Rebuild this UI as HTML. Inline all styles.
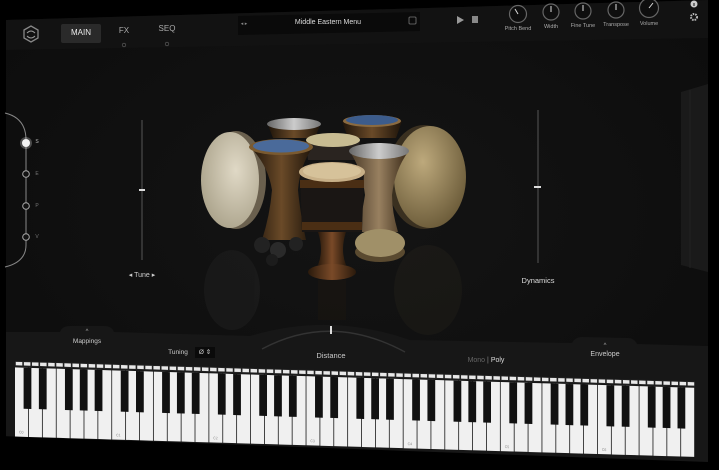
<!DOCTYPE html>
<html><head><meta charset="utf-8"><style>
html,body{margin:0;padding:0;background:#000;width:719px;height:470px;overflow:hidden;font-family:"Liberation Sans",sans-serif;}
.a{position:absolute;}
.t{position:absolute;color:#ddd;font-size:7px;white-space:nowrap;transform:translateX(-50%);}
</style></head><body>
<svg class="a" style="left:0;top:0" width="719" height="470" viewBox="0 0 719 470">
<defs>
<radialGradient id="vg" cx="0.5" cy="0.45" r="0.7">
<stop offset="0" stop-color="#141414"/><stop offset="1" stop-color="#0c0c0c"/></radialGradient>
<linearGradient id="met" x1="0" x2="1"><stop offset="0" stop-color="#666"/><stop offset=".5" stop-color="#ccc"/><stop offset="1" stop-color="#777"/></linearGradient>
<linearGradient id="wood" x1="0" x2="1"><stop offset="0" stop-color="#2a1a0c"/><stop offset=".5" stop-color="#7a4a28"/><stop offset="1" stop-color="#2a1a0c"/></linearGradient>
<linearGradient id="pat" x1="0" x2="1"><stop offset="0" stop-color="#1e140a"/><stop offset=".5" stop-color="#6a4a28"/><stop offset="1" stop-color="#1e140a"/></linearGradient>
<linearGradient id="pat2" x1="0" x2="1"><stop offset="0" stop-color="#4a3a28"/><stop offset=".5" stop-color="#988060"/><stop offset="1" stop-color="#3a2a18"/></linearGradient>
<radialGradient id="fd1" cx=".6" cy=".4" r=".7"><stop offset="0" stop-color="#e0d9c6"/><stop offset="1" stop-color="#a8a088"/></radialGradient>
<radialGradient id="fd2" cx=".4" cy=".35" r=".7"><stop offset="0" stop-color="#bda97c"/><stop offset="1" stop-color="#6a5a38"/></radialGradient>
</defs>
<polygon points="6,20 708,0 708,470 6,470" fill="url(#vg)"/>
<polygon points="6,20 708,0 708,38 6,50" fill="#121212"/>
<path d="M6,332 L60,332 Q62,326 70,326 L104,326 Q112,326 114,332 L250,336 Q330,312 410,340 L572,343 Q575,337 582,337 L628,338 Q634,338 637,344 L708,346 L708,470 L6,470 Z" fill="#171717"/>
<path d="M262,349 Q331,312 405,352" stroke="#333" stroke-width="1.5" fill="none"/>
<rect x="330" y="326" width="2" height="8" fill="#ddd"/>
<polygon points="681,92 708,84 708,272 681,265" fill="#1a1a1a"/>
<line x1="690" y1="90" x2="690" y2="268" stroke="#222"/>
<polygon points="0,436 708,462 708,470 0,470" fill="#000"/>
<rect x="708" y="0" width="11" height="470" fill="#000"/>
<path d="M5,113 Q26,118 26,140 L26,245 Q26,262 5,267" stroke="#888" stroke-width="1" fill="none"/>
<circle cx="26" cy="143" r="6" fill="#fff" opacity=".25"/>
<circle cx="26" cy="143" r="4" fill="#f2f2f2"/>
<circle cx="26" cy="174" r="3.3" fill="#121212" stroke="#aaa"/>
<circle cx="26" cy="206" r="3.3" fill="#121212" stroke="#aaa"/>
<circle cx="26" cy="237" r="3.3" fill="#121212" stroke="#aaa"/>
<rect x="141" y="120" width="2" height="140" fill="#333"/>
<rect x="139" y="189" width="6" height="2" fill="#ddd"/>
<rect x="537" y="110" width="2" height="153" fill="#333"/>
<rect x="534" y="186" width="7" height="2" fill="#ddd"/>
<g opacity=".12">
<ellipse cx="232" cy="290" rx="28" ry="40" fill="#555"/>
<ellipse cx="428" cy="290" rx="34" ry="45" fill="#554a30"/>
<rect x="318" y="280" width="28" height="40" fill="#3a2410"/>
</g>
<ellipse cx="236" cy="180" rx="30" ry="49" fill="#6a604e"/>
<ellipse cx="230" cy="180" rx="29" ry="48" fill="url(#fd1)"/>
<ellipse cx="424" cy="177" rx="37" ry="52" fill="#3a3020"/>
<ellipse cx="430" cy="177" rx="36" ry="51" fill="url(#fd2)"/>
<path d="M268,125 L320,125 L315,138 L273,138 Z" fill="url(#pat)"/>
<ellipse cx="294" cy="124" rx="27" ry="6" fill="url(#met)"/>
<path d="M342,121 L402,121 L396,138 L348,138 Z" fill="url(#pat)"/>
<ellipse cx="372" cy="121" rx="29" ry="6" fill="#8a6a40"/>
<ellipse cx="372" cy="120" rx="26" ry="5" fill="#3c5c8c"/>
<path d="M306,140 L360,140 L358,160 L308,160 Z" fill="#2a2420"/>
<ellipse cx="333" cy="140" rx="27" ry="7" fill="#c8bc92"/>
<path d="M250,147 Q268,165 272,190 Q270,215 262,240 L306,240 Q300,212 298,190 Q300,165 313,147 Z" fill="url(#pat)"/>
<ellipse cx="281" cy="147" rx="32" ry="8" fill="#7a5a30"/>
<ellipse cx="281" cy="146" rx="28" ry="6.5" fill="#4a6a9a"/>
<path d="M350,152 Q362,170 365,195 Q362,215 356,232 L398,232 Q392,212 392,195 Q395,170 408,152 Z" fill="url(#pat2)"/>
<ellipse cx="379" cy="151" rx="30" ry="8" fill="url(#met)"/>
<circle cx="262" cy="245" r="8" fill="#222"/><circle cx="278" cy="250" r="8" fill="#2a2a2a"/><circle cx="296" cy="244" r="7" fill="#222"/><circle cx="272" cy="260" r="6" fill="#1c1c1c"/>
<path d="M300,172 L364,172 L362,232 L302,232 Z" fill="#1a1614"/>
<rect x="300" y="180" width="64" height="8" fill="#4a2e14"/>
<rect x="302" y="222" width="60" height="8" fill="#4a2e14"/>
<path d="M318,232 L346,232 Q340,250 346,265 L318,265 Q324,250 318,232 Z" fill="url(#wood)"/>
<ellipse cx="332" cy="272" rx="24" ry="8" fill="url(#wood)"/>
<ellipse cx="332" cy="172" rx="33" ry="10" fill="#c8b088"/>
<ellipse cx="332" cy="171" rx="29" ry="8" fill="#d6c29a"/>
<ellipse cx="380" cy="252" rx="25" ry="10" fill="#5a4a30"/>
<ellipse cx="380" cy="243" rx="25" ry="14" fill="#a09068"/>
<g id="kb" transform="matrix(1,0.03,0,1.08,0,360.5)"></g>
<path d="M24,30 L31,26 L38,30 L38,38 L31,42 L24,38 Z" fill="none" stroke="#888" stroke-width="1.3"/>
<path d="M27,33 Q31,29 35,33 M27,36 Q31,40 35,36" stroke="#999" fill="none"/>
<rect x="61" y="24" width="40" height="19" rx="2" fill="#2a2a2a"/>
<rect x="106" y="22" width="37" height="18" rx="2" fill="#121212"/>
<rect x="148" y="20" width="38" height="18" rx="2" fill="#121212"/>
<circle cx="124" cy="45" r="1.8" fill="none" stroke="#666" stroke-width=".6"/>
<circle cx="167" cy="44" r="1.8" fill="none" stroke="#666" stroke-width=".6"/>
<polygon points="238,16 420,12 420,31 238,35" fill="#0a0a0a"/>
<rect x="409" y="17" width="7" height="7" rx="1" fill="none" stroke="#777" stroke-width=".8"/>
<polygon points="457,16 464,20 457,24" fill="#999"/>
<rect x="472" y="16" width="6" height="7" fill="#888"/>
<g fill="#0e0e0e" stroke="#666" stroke-width="1.2">
<circle cx="518" cy="14" r="8.5"/><circle cx="551" cy="12" r="8"/><circle cx="583" cy="11" r="8"/><circle cx="616" cy="10" r="8"/><circle cx="649" cy="8" r="9.5"/></g>
<g stroke="#ddd" stroke-width="1"><line x1="518" y1="14" x2="515" y2="9"/><line x1="551" y1="12" x2="551" y2="6"/><line x1="583" y1="11" x2="583" y2="5"/><line x1="616" y1="10" x2="616" y2="4"/><line x1="649" y1="8" x2="653" y2="3"/></g>
<circle cx="694" cy="4" r="3.5" fill="#ccc"/><rect x="693.5" y="3" width="1" height="3" fill="#111"/>
<circle cx="694" cy="17" r="3" fill="none" stroke="#bbb" stroke-width="2" stroke-dasharray="1.5 1"/>
</svg>
<div class="t" style="left:81px;top:28px;font-size:8px;color:#eee">MAIN</div>
<div class="t" style="left:124px;top:26px;font-size:8px;color:#aaa">FX</div>
<div class="t" style="left:167px;top:24px;font-size:8px;color:#aaa">SEQ</div>
<div class="t" style="left:244px;top:21px;font-size:5px;color:#888">◂ ▸</div>
<div class="t" style="left:328px;top:19px;font-size:7px;color:#ddd">Middle Eastern Menu</div>
<div class="t" style="left:518px;top:26px;font-size:5.5px;color:#aaa">Pitch Bend</div>
<div class="t" style="left:551px;top:24px;font-size:5.5px;color:#aaa">Width</div>
<div class="t" style="left:583px;top:23px;font-size:5.5px;color:#aaa">Fine Tune</div>
<div class="t" style="left:616px;top:22px;font-size:5.5px;color:#aaa">Transpose</div>
<div class="t" style="left:649px;top:21px;font-size:5.5px;color:#aaa">Volume</div>
<div class="t" style="left:37px;top:139px;font-size:5px;color:#bbb">S</div>
<div class="t" style="left:37px;top:171px;font-size:5px;color:#777">E</div>
<div class="t" style="left:37px;top:203px;font-size:5px;color:#777">P</div>
<div class="t" style="left:37px;top:234px;font-size:5px;color:#777">V</div>
<div class="t" style="left:142px;top:271px;font-size:7px;color:#ccc">◂ Tune ▸</div>
<div class="t" style="left:538px;top:276px;font-size:7.5px;color:#ddd">Dynamics</div>
<div class="t" style="left:87px;top:329px;font-size:6px;color:#aaa">^</div>
<div class="t" style="left:87px;top:338px;font-size:6.5px;color:#ccc">Mappings</div>
<div class="t" style="left:178px;top:349px;font-size:6.5px;color:#ccc">Tuning</div>
<div class="a" style="left:195px;top:347px;width:20px;height:11px;background:#0a0a0a;color:#ccc;font-size:6.5px;line-height:11px;text-align:center">Ø ⇕</div>
<div class="t" style="left:331px;top:351px;font-size:7.5px;color:#ccc">Distance</div>
<div class="t" style="left:486px;top:357px;font-size:7px;color:#666">Mono <span style="color:#888">|</span> <span style="color:#ddd">Poly</span></div>
<div class="t" style="left:605px;top:343px;font-size:6px;color:#aaa">^</div>
<div class="t" style="left:605px;top:351px;font-size:7px;color:#ccc">Envelope</div>
<script>
(function(){
var g=document.getElementById('kb'),h='';
var x0=15,W=680/49,H=64,BH=38;
h+='<rect x="'+x0+'" y="0" width="680" height="5" fill="#222"/>';
var lp=680/84;
for(var i=0;i<84;i++)h+='<rect x="'+(x0+i*lp+0.8).toFixed(2)+'" y="0.8" width="'+(lp-1.6).toFixed(2)+'" height="3.2" fill="#e8e8e8"/>';
for(var i=0;i<49;i++){h+='<rect x="'+(x0+i*W).toFixed(2)+'" y="6" width="'+(W-0.8).toFixed(2)+'" height="'+H+'" fill="#f0f0f0"/>';
if(i%7==0)h+='<text x="'+(x0+i*W+4).toFixed(1)+'" y="'+(6+H-3)+'" font-size="3.5" fill="#888" font-family="Liberation Sans">C'+(i/7)+'</text>';}
var off=[0.62,1.72,3.6,4.67,5.74];
for(var o=0;o<7;o++)for(var k=0;k<5;k++){h+='<rect x="'+(x0+(o*7+off[k])*W).toFixed(2)+'" y="6" width="'+(W*0.56).toFixed(2)+'" height="'+BH+'" fill="#111"/>';}
g.innerHTML=h;
})();
</script>
</body></html>
